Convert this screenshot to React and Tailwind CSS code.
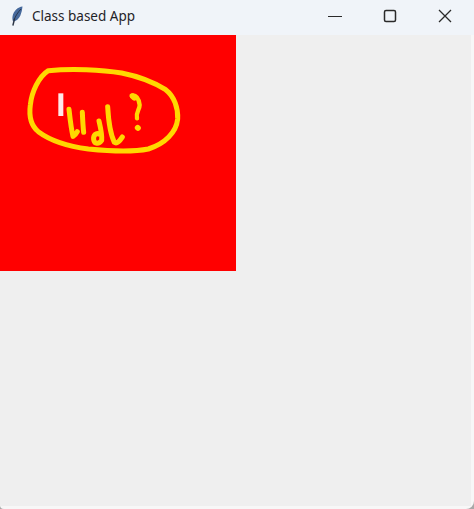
import React from "react";

function Feather() {
  return (
    <svg width="14" height="20" viewBox="0 0 14 20" className="shrink-0">
      <path d="M12.500 0.500C8 0.800 3.500 5 2.600 10c-.4 2.200-.2 3.800.4 5.500 3-.4 6-2.500 7.400-6 1.200-3 1.900-6 2.100-9Z" fill="#46699c" />
      <path d="M11 3C8 6 5.500 10 4 14" fill="none" stroke="#27364f" strokeWidth="1" />
      <path d="M4.500 13L3 19" fill="none" stroke="#2b3444" strokeWidth="1.400" strokeLinecap="round" />
    </svg>
  );
}

function Scribble() {
  const yellow = "#ffd800";
  return (
    <svg width="175" height="110" viewBox="0 0 525 330" className="block">
      <path
        d="M100 47C170 40 260 44 320 54C380 66 420 84 452 104C478 124 490 160 488 192C484 232 450 266 400 282C350 292 280 288 220 282C160 274 105 256 70 230C48 212 42 180 46 150C50 112 70 66 100 47Z"
        fill="none"
        stroke={yellow}
        strokeWidth="15"
        strokeLinejoin="round"
      />
      <rect x="130" y="115" width="15" height="68" fill="#ffe8e8" />
      <g fill="none" stroke={yellow} strokeWidth="15" strokeLinecap="round" strokeLinejoin="round">
        <path d="M162 163C165 190 168 220 174 244C180 240 184 236 187 230" />
        <path d="M202 172C203 195 204 215 206 232" />
        <path d="M252 198C257 220 262 240 260 256C252 268 238 268 236 254C234 240 244 232 254 238" />
        <path d="M278 155C280 190 285 235 298 262C306 268 314 258 322 246" />
      </g>
      <g fill="none" stroke={yellow} strokeWidth="13" strokeLinecap="round" strokeLinejoin="round">
        <path d="M350 122C362 118 372 130 374 150C374 165 362 170 366 190" />
        <path d="M353 124L358 128" strokeWidth="17" />
        <path d="M368 218L369 219" strokeWidth="17" />
      </g>
    </svg>
  );
}

export default function App() {
  return (
    <div className="w-[474px] h-[509px] overflow-hidden bg-[#a8a8a8]">
      <div className="relative h-[509px] overflow-hidden rounded-br-[8px] rounded-bl-[4px] bg-[#f7f7f7] pr-[3px] pb-[3px]">
        <header className="-mr-[3px] flex h-[35px] items-center bg-[#f0f4f9] pb-[3px] pl-[10px]">
          <Feather />
          <span className="ml-[8px] text-[13.500px] text-[#1f2328] font-['Noto_Sans',sans-serif]">Class based App</span>
          <div className="ml-auto flex items-center pr-[22px] text-[#2a2a2a]">
            <svg width="14" height="14" viewBox="0 0 14 14" className="mr-[41px]">
              <path d="M0 7.500H14" stroke="currentColor" strokeWidth="1.200" />
            </svg>
            <svg width="14" height="14" viewBox="0 0 14 14" className="mr-[41px]">
              <rect x="1.500" y="1.500" width="11" height="11" rx="1.500" fill="none" stroke="currentColor" strokeWidth="1.500" />
            </svg>
            <svg width="14" height="14" viewBox="0 0 14 14">
              <path d="M1 1L13 13M13 1L1 13" stroke="currentColor" strokeWidth="1.300" />
            </svg>
          </div>
        </header>
        <div className="h-[471px] bg-[#efefef]">
          <main className="h-[236px] w-[236px] bg-[#ff0000] pl-[15px] pt-[20px]">
            <Scribble />
          </main>
        </div>
      </div>
    </div>
  );
}
